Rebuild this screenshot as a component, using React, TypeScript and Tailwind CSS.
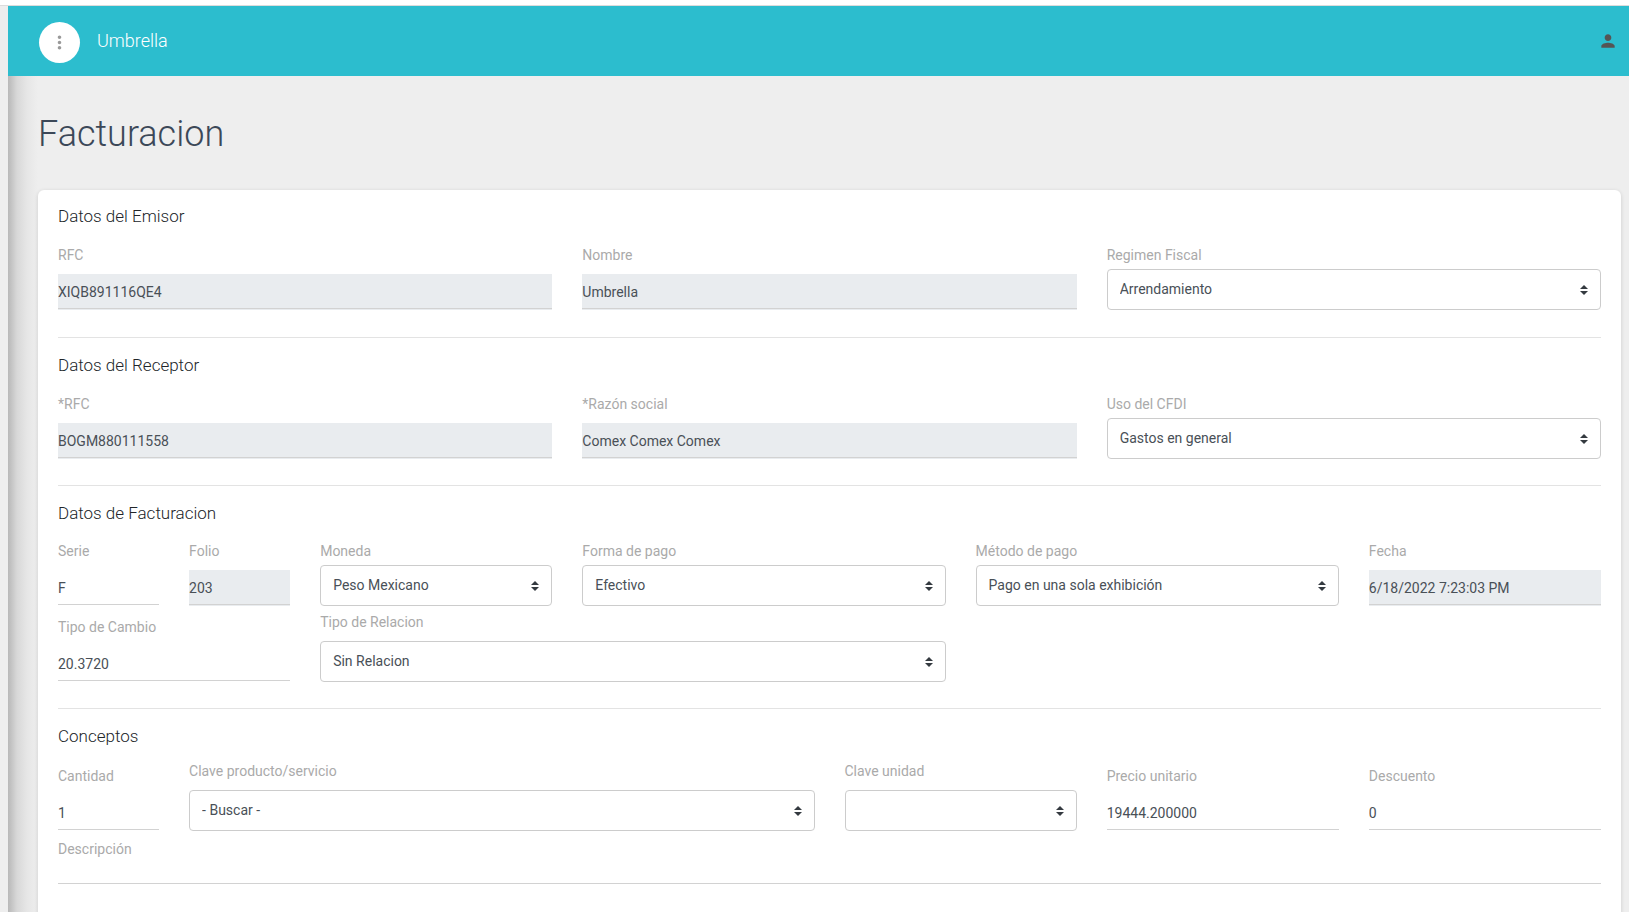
import type { ReactNode } from "react"
import { MdMoreVert, MdPerson } from "react-icons/md"

type FieldProps = {
    id: string
    label: string
    value?: string
    span: string
    disabled?: boolean
    compact?: boolean
}

const LABEL = "block text-sm leading-5 text-[#aaaaaa]"

const TextField = ({ id, label, value = "", span, disabled = false, compact = false }: FieldProps) => (
    <div className={span}>
        <label htmlFor={id} className={LABEL}>{label}</label>
        {/* The underline sits one pixel above the bottom edge */}
        <div className={`${compact ? "" : "mt-[9px]"} pb-px ${disabled ? "bg-[#e9ecef]" : ""}`}>
            <input
                id={id}
                type="text"
                defaultValue={value}
                disabled={disabled}
                className={`block w-full border-b border-[#d2d2d2] bg-transparent pt-0.5 text-sm leading-5 text-[#495057] outline-none focus:border-[#2cbdce] ${compact ? "h-[25px]" : "h-[35px]"}`}
            />
        </div>
    </div>
)

const SelectField = ({ id, label, value = "", span, compact = false }: FieldProps) => (
    <div className={span}>
        <label htmlFor={id} className={LABEL}>{label}</label>
        <div className={`relative ${compact ? "mt-1" : "mt-[9px]"}`}>
            <select
                id={id}
                className="block h-[41px] w-full appearance-none rounded border border-[#cccccc] bg-white pr-7 pb-px pl-3 text-sm text-[#495057] outline-none focus:border-[#2cbdce]"
            >
                <option>{value}</option>
            </select>
            <svg viewBox="0 0 4 5" className="pointer-events-none absolute top-1/2 right-[13px] h-[10px] w-2 -translate-y-1/2">
                <path fill="#343a40" d="M2 0L0 2h4zm0 5L0 3h4z" />
            </svg>
        </div>
    </div>
)

const Row = ({ className, children }: { className: string; children: ReactNode }) => (
    <div className={`grid grid-cols-12 items-end gap-x-[30px] ${className}`}>{children}</div>
)

const Title = ({ children }: { children: ReactNode }) => (
    <h4 className="text-[17px] leading-6 font-light text-[#212529]">{children}</h4>
)

const Divider = () => <hr className="mt-[26px] mb-[15px] border-[#e3e3e3]" />

const App = () => {
    return (
        <div className="flex h-screen flex-col overflow-hidden bg-[#eeeeee] font-['Roboto',sans-serif]">
            <div className="h-[6px] shrink-0 border-b border-[#dcdcdc] bg-white" />

            <div className="min-h-0 flex-1 pl-2">
                <header className="flex h-[70px] items-center bg-[#2cbdce] pr-[11px] pl-[31px]">
                    <button
                        type="button"
                        aria-label="Menu"
                        className="mt-[3px] flex h-[41px] w-[41px] items-center justify-center rounded-full bg-white text-[#999999]"
                    >
                        <MdMoreVert size={21} />
                    </button>
                    <a href="#" className="ml-[17px] text-lg font-light text-white">Umbrella</a>
                    <button type="button" aria-label="Perfil" className="mb-px ml-auto text-[#555555]">
                        <MdPerson size={20} />
                    </button>
                </header>

                <main className="h-full bg-[linear-gradient(to_right,#b8b8b8,#d8d8d8_9px,#e6e6e6_19px,#eeeeee_30px)] pt-8 pr-2 pl-[30px]">
                    <h1 className="text-4xl leading-[52px] font-light text-[#3c4858]">Facturacion</h1>

                    <form className="mt-[30px] h-full rounded-md bg-white px-5 pt-[14px] shadow-[0_1px_4px_0_rgba(0,0,0,0.14)]">
                        <Title>Datos del Emisor</Title>
                        <Row className="mt-[17px] mb-[27px]">
                            <TextField id="emisor-rfc" label="RFC" value="XIQB891116QE4" span="col-span-4" disabled />
                            <TextField id="emisor-nombre" label="Nombre" value="Umbrella" span="col-span-4" disabled />
                            <SelectField id="regimen" label="Regimen Fiscal" value="Arrendamiento" span="col-span-4" compact />
                        </Row>
                        <Divider />

                        <Title>Datos del Receptor</Title>
                        <Row className="mt-[17px]">
                            <TextField id="receptor-rfc" label="*RFC" value="BOGM880111558" span="col-span-4" disabled />
                            <TextField id="razon" label="*Razón social" value="Comex Comex Comex" span="col-span-4" disabled />
                            <SelectField id="uso-cfdi" label="Uso del CFDI" value="Gastos en general" span="col-span-4" compact />
                        </Row>
                        <Divider />

                        <Title>Datos de Facturacion</Title>
                        <Row className="mt-4">
                            <TextField id="serie" label="Serie" value="F" span="col-span-1" />
                            <TextField id="folio" label="Folio" value="203" span="col-span-1" disabled />
                            <SelectField id="moneda" label="Moneda" value="Peso Mexicano" span="col-span-2" compact />
                            <SelectField id="forma-pago" label="Forma de pago" value="Efectivo" span="col-span-3" compact />
                            <SelectField id="metodo-pago" label="Método de pago" value="Pago en una sola exhibición" span="col-span-3" compact />
                            <TextField id="fecha" label="Fecha" value="6/18/2022 7:23:03 PM" span="col-span-2" disabled />
                        </Row>
                        <Row className="mt-[6px]">
                            <TextField id="tipo-cambio" label="Tipo de Cambio" value="20.3720" span="col-span-2" />
                            <SelectField id="tipo-relacion" label="Tipo de Relacion" value="Sin Relacion" span="col-span-5" />
                        </Row>
                        <Divider />

                        <Title>Conceptos</Title>
                        <Row className="mt-[13px]">
                            <TextField id="cantidad" label="Cantidad" value="1" span="col-span-1" />
                            <SelectField id="clave-producto" label="Clave producto/servicio" value="- Buscar -" span="col-span-5" />
                            <SelectField id="clave-unidad" label="Clave unidad" span="col-span-2" />
                            <TextField id="precio" label="Precio unitario" value="19444.200000" span="col-span-2" />
                            <TextField id="descuento" label="Descuento" value="0" span="col-span-2" />
                        </Row>
                        <Row className="mt-2">
                            <TextField id="descripcion" label="Descripción" span="col-span-12" compact />
                        </Row>
                    </form>
                </main>
            </div>
        </div>
    )
}

export default App
